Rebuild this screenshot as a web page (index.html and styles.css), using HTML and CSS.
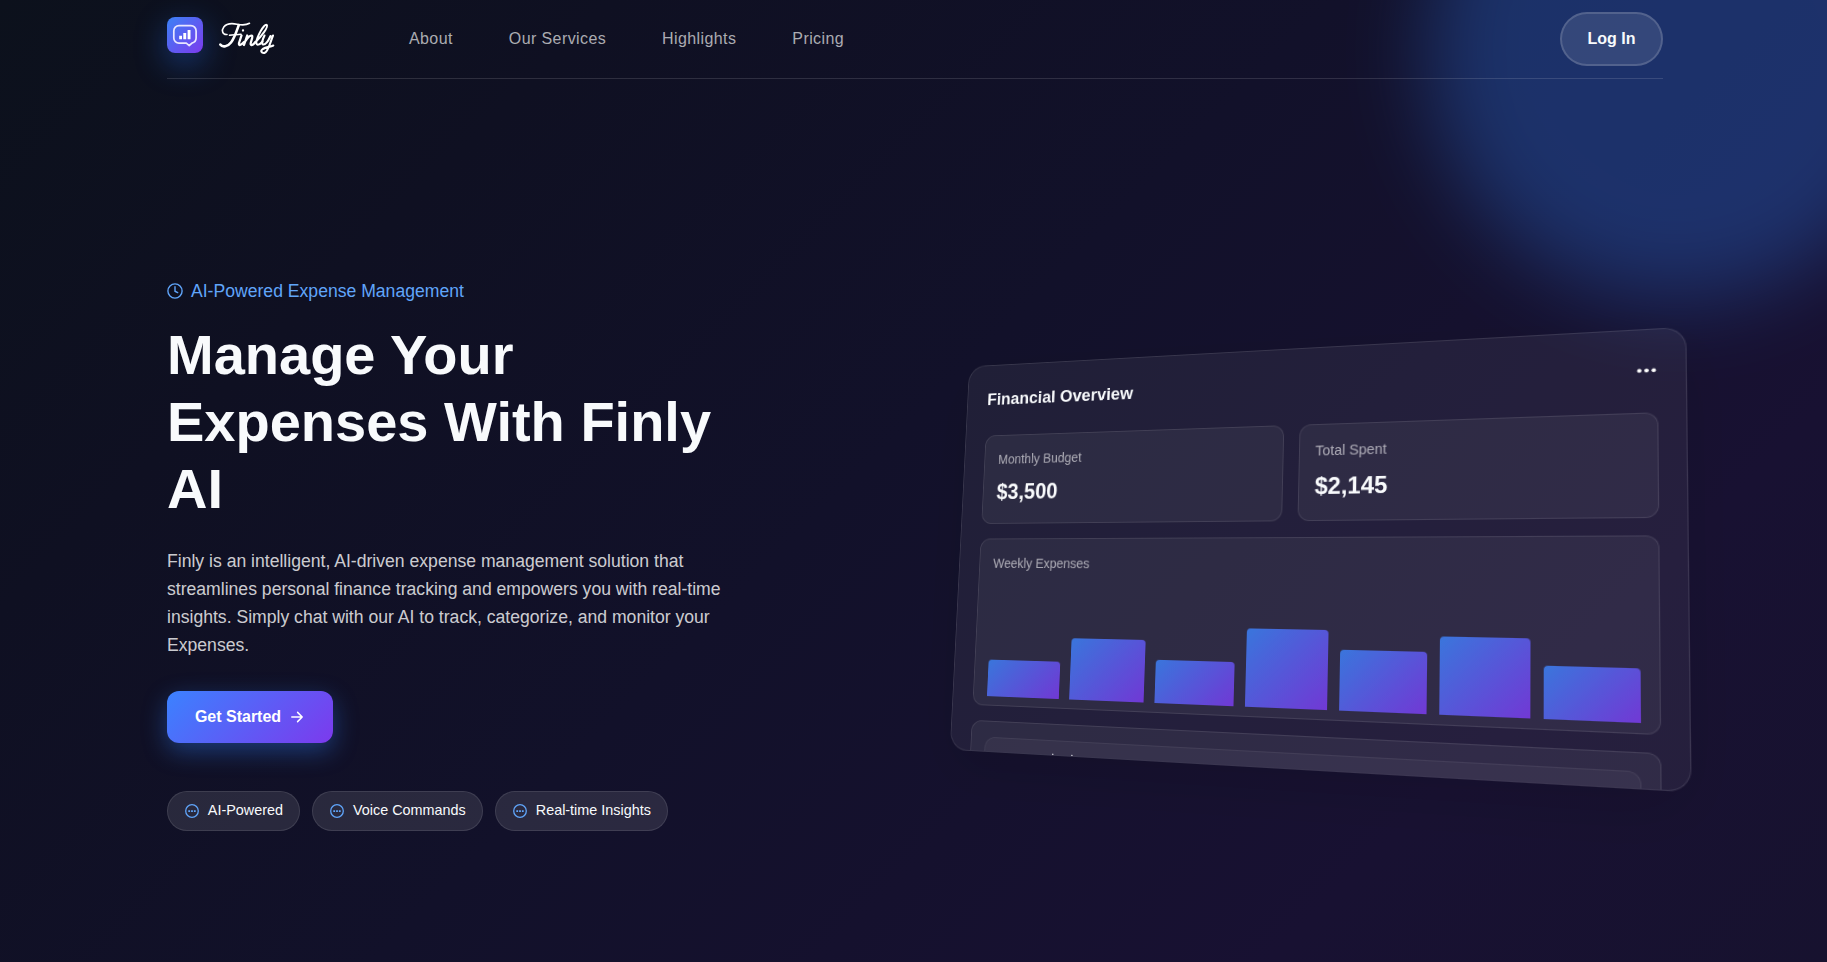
FILE: index.html
```html
<!DOCTYPE html>
<html lang="en">
<head>
<meta charset="utf-8">
<title>Finly</title>
<link rel="stylesheet" href="styles.css">
</head>
<body>
<div class="page">
  <div class="glow"></div>
  <header class="nav">
    <div class="brand">
      <span class="brand-mark">
        <svg width="36" height="36" viewBox="0 0 36 36" fill="none">
          <path d="M12 8.700h11.900a5.200 5.200 0 0 1 5.200 5.200v7.200a5.200 5.200 0 0 1-4.200 5l-2.700 2.500-2.900-2.400H12a5.200 5.200 0 0 1-5.200-5.200v-7.100A5.200 5.200 0 0 1 12 8.700z" stroke="#e9e6ff" stroke-width="1.700" stroke-linejoin="round"/>
          <path d="M12.200 18.800h2.800v3.400h-2.800zM16.300 16h2.900v6.200h-2.900zM20.600 13h2.900v9.200h-2.900z" fill="#fff"/>
        </svg>
      </span>
      <svg class="wordmark" width="58" height="36" viewBox="0 0 58 36" fill="none" stroke="#fff" stroke-linecap="round" stroke-linejoin="round" role="img" aria-label="Finly">
        <path stroke-width="1.600" d="M8 17.500C3.500 18 2.200 13.500 4.800 10C8 5.800 13 6.200 18 7.200C23 8.200 27.500 8 30.500 6.300"/>
        <path stroke-width="2.600" d="M19.800 8C17.500 14.500 15.500 21 12 25.500C9 29.500 3.500 30.800 1.300 27.500"/>
        <path stroke-width="1.500" d="M10.500 18.300C14 17.300 18 18 22 17.200"/>
        <path stroke-width="2.300" d="M22.500 18.500L20 26C19.500 29 22 28.500 25 25M24 13.300v.3"/>
        <path stroke-width="2.300" d="M28.200 18.500L25 28M26.500 24C29 20 31.500 18 33 18.700C34.500 20 31 25.500 31.700 27.300C32.500 29 34.500 27.500 36.500 25"/>
        <path stroke-width="2" d="M36.500 25C42.500 19.500 49.500 10 47.800 8C45 6 37.500 21 37.300 25.500C37.500 29 40.500 28 43.500 24.500"/>
        <path stroke-width="2.100" d="M45.500 18.500C43.500 22.500 42.300 27 44 27.500C46.500 28 49.500 23.500 51.500 19M54 18.500C51.500 24.500 49 35.300 45.500 35.900C42.500 36.300 41 34 43.800 32C47 30 51 30 54.300 28.500"/>
      </svg>
    </div>
    <nav class="links">
      <a>About</a><a>Our Services</a><a>Highlights</a><a>Pricing</a>
    </nav>
    <button class="login">Log In</button>
  </header>

  <main class="hero">
    <section class="copy">
      <div class="eyebrow">
        <svg width="16" height="16" viewBox="0 0 16 16" fill="none" stroke="currentColor" stroke-width="1.400" stroke-linecap="round"><circle cx="8" cy="8" r="7.100"/><path d="M8 3.800v4.400l2.700 1.400"/></svg>
        <span>AI-Powered Expense Management</span>
      </div>
      <h1>Manage Your Expenses With Finly AI</h1>
      <p class="lead">Finly is an intelligent, AI-driven expense management solution that streamlines personal finance tracking and empowers you with real-time insights. Simply chat with our AI to track, categorize, and monitor your Expenses.</p>
      <button class="cta">Get Started
        <svg width="16" height="16" viewBox="0 0 16 16" fill="none" stroke="currentColor" stroke-width="1.500" stroke-linecap="round" stroke-linejoin="round"><path d="M2.800 8h10.400M8.600 3.400 13.200 8l-4.600 4.600"/></svg>
      </button>
      <div class="chips">
        <span class="chip"><svg class="chat"><use href="#chat"/></svg>AI-Powered</span>
        <span class="chip"><svg class="chat"><use href="#chat"/></svg>Voice Commands</span>
        <span class="chip"><svg class="chat"><use href="#chat"/></svg>Real-time Insights</span>
      </div>
    </section>

    <section class="preview">
      <div class="card">
        <div class="card-head">
          <h3>Financial Overview</h3>
          <svg width="24" height="24" viewBox="0 0 24 24" fill="#fff"><circle cx="7.700" cy="12.300" r="1.900"/><circle cx="14" cy="12.300" r="1.900"/><circle cx="20.300" cy="12.300" r="1.900"/></svg>
        </div>
        <div class="stats">
          <div class="panel stat"><div class="label">Monthly Budget</div><div class="value">$3,500</div></div>
          <div class="panel stat"><div class="label">Total Spent</div><div class="value">$2,145</div></div>
        </div>
        <div class="panel chart">
          <div class="label">Weekly Expenses</div>
          <div class="bars">
            <i style="height:40%"></i><i style="height:65%"></i><i style="height:45%"></i><i style="height:80%"></i><i style="height:60%"></i><i style="height:75%"></i><i style="height:50%"></i>
          </div>
        </div>
        <div class="panel feed"><div class="entry">Manage budget</div></div>
      </div>
    </section>
  </main>
</div>
<svg class="defs" width="0" height="0">
  <symbol id="chat" viewBox="0 0 14 14">
    <circle cx="7" cy="7" r="6.300" fill="none" stroke="currentColor" stroke-width="1.300"/>
    <path d="M3.300 6.200h1.800v1.700H3.300zM6.100 6.200h1.800v1.700H6.100zM8.900 6.200h1.800v1.700H8.900z" fill="currentColor"/>
  </symbol>
</svg>
</body>
</html>
```
FILE: styles.css
```css
* { box-sizing: border-box; margin: 0; padding: 0; }
body {
  font-family: "Liberation Sans", Arial, sans-serif;
  color: #f8fafc;
  background: #0f0f23;
  height: 962px;
  overflow: hidden;
}
.defs { display: block; }
.page {
  position: relative;
  height: 962px;
  overflow: hidden;
  padding: 0 164px 0 167px;
  background: linear-gradient(135deg, #0c111c 0%, #0f1022 22%, #12112a 48%, #181132 80%, #17122f 100%);
}
.glow {
  position: absolute;
  left: 1427px;
  top: -200px;
  width: 500px;
  height: 500px;
  border-radius: 50%;
  background: #2f7df6;
  opacity: .3;
  filter: blur(42px);
}
.nav {
  position: relative;
  display: flex;
  align-items: center;
  height: 79px;
  border-bottom: 1px solid rgba(255, 255, 255, .13);
}
.brand { display: flex; gap: 16px; width: 242px; margin-top: -8px; }
.wordmark { overflow: visible; }
.brand-mark {
  width: 36px;
  height: 36px;
  border-radius: 8px;
  background: linear-gradient(135deg, #3b82f6, #7c3aed);
  box-shadow: 0 10px 32px rgba(35, 115, 246, .42);
}
.brand-mark svg { display: block; }
.links { display: flex; gap: 56px; }
.links a { font-size: 16px; letter-spacing: .4px; color: rgba(255, 255, 255, .66); }
.login {
  margin-left: auto;
  width: 103px;
  height: 54px;
  border: 2px solid rgba(255, 255, 255, .15);
  border-radius: 27px;
  background: rgba(255, 255, 255, .11);
  color: #f8fafc;
  font: bold 16px "Liberation Sans", Arial, sans-serif;
}
.hero {
  position: relative;
  display: grid;
  grid-template-columns: 748px 748px;
  align-items: center;
  height: 950px;
}
.copy { width: 560px; }
.eyebrow {
  display: flex;
  align-items: center;
  gap: 8px;
  font-size: 17.6px;
  line-height: 28px;
  color: #60a5fa;
  margin-bottom: 15.5px;
}
h1 { font-size: 56px; line-height: 67.2px; margin-bottom: 24px; }
.lead {
  font-size: 17.6px;
  line-height: 28px;
  color: rgba(255, 255, 255, .8);
  margin-bottom: 32px;
}
.cta {
  display: flex;
  align-items: center;
  justify-content: center;
  gap: 8px;
  width: 166px;
  height: 52px;
  border: 0;
  border-radius: 12px;
  background: linear-gradient(135deg, #3b82ff, #7c3aed);
  box-shadow: 0 8px 25px rgba(45, 125, 246, .4);
  color: #fff;
  font: bold 16px "Liberation Sans", Arial, sans-serif;
  margin-bottom: 48px;
}
.chips { display: flex; gap: 12px; white-space: nowrap; }
.chip {
  display: flex;
  align-items: center;
  gap: 8.8px;
  height: 40px;
  padding: 0 16.2px 1px 17px;
  border: 1px solid rgba(255, 255, 255, .1);
  border-radius: 20px;
  background: rgba(255, 255, 255, .1);
  font-size: 14.4px;
}
.chat { width: 14px; height: 14px; margin-top: 1px; color: #60a5fa; }
.card {
  height: 421.5px;
  margin-top: 2px;
  padding: 24px;
  border: 1px solid rgba(255, 255, 255, .1);
  border-radius: 20px;
  overflow: hidden;
  background: rgba(255, 255, 255, .06);
  box-shadow: 0 20px 60px rgba(0, 0, 0, .12);
  transform: perspective(1000px) rotateY(-15deg) rotateX(5deg);
}
.card-head {
  display: flex;
  justify-content: space-between;
  align-items: center;
  height: 27px;
  margin-bottom: 26.5px;
}
h3 { font-size: 19.2px; line-height: 27px; }
.stats { display: grid; grid-template-columns: 1fr 1fr; gap: 16px; margin-bottom: 16px; }
.panel {
  padding: 16px;
  border: 1px solid rgba(255, 255, 255, .1);
  border-radius: 12px;
  background: rgba(255, 255, 255, .05);
}
.label { font-size: 14.4px; line-height: 20px; color: rgba(255, 255, 255, .6); }
.stat { height: 98.5px; }
.value { margin-top: 8px; font-size: 24px; line-height: 36px; font-weight: bold; }
.chart { height: 180px; margin-bottom: 16px; }
.bars { display: flex; align-items: flex-end; gap: 12px; height: 97.5px; margin-top: 35px; }
.bars i {
  flex: 1;
  border-radius: 4px 4px 0 0;
  background: linear-gradient(135deg, #3b82f6, #7c3aed);
  opacity: .85;
}
.feed { height: 200px; }
.entry {
  height: 80px;
  padding: 7.5px 19px;
  border: 1px solid rgba(255, 255, 255, .06);
  border-radius: 12px;
  background: rgba(255, 255, 255, .04);
  font-size: 15.2px;
  line-height: 21px;
}
```
